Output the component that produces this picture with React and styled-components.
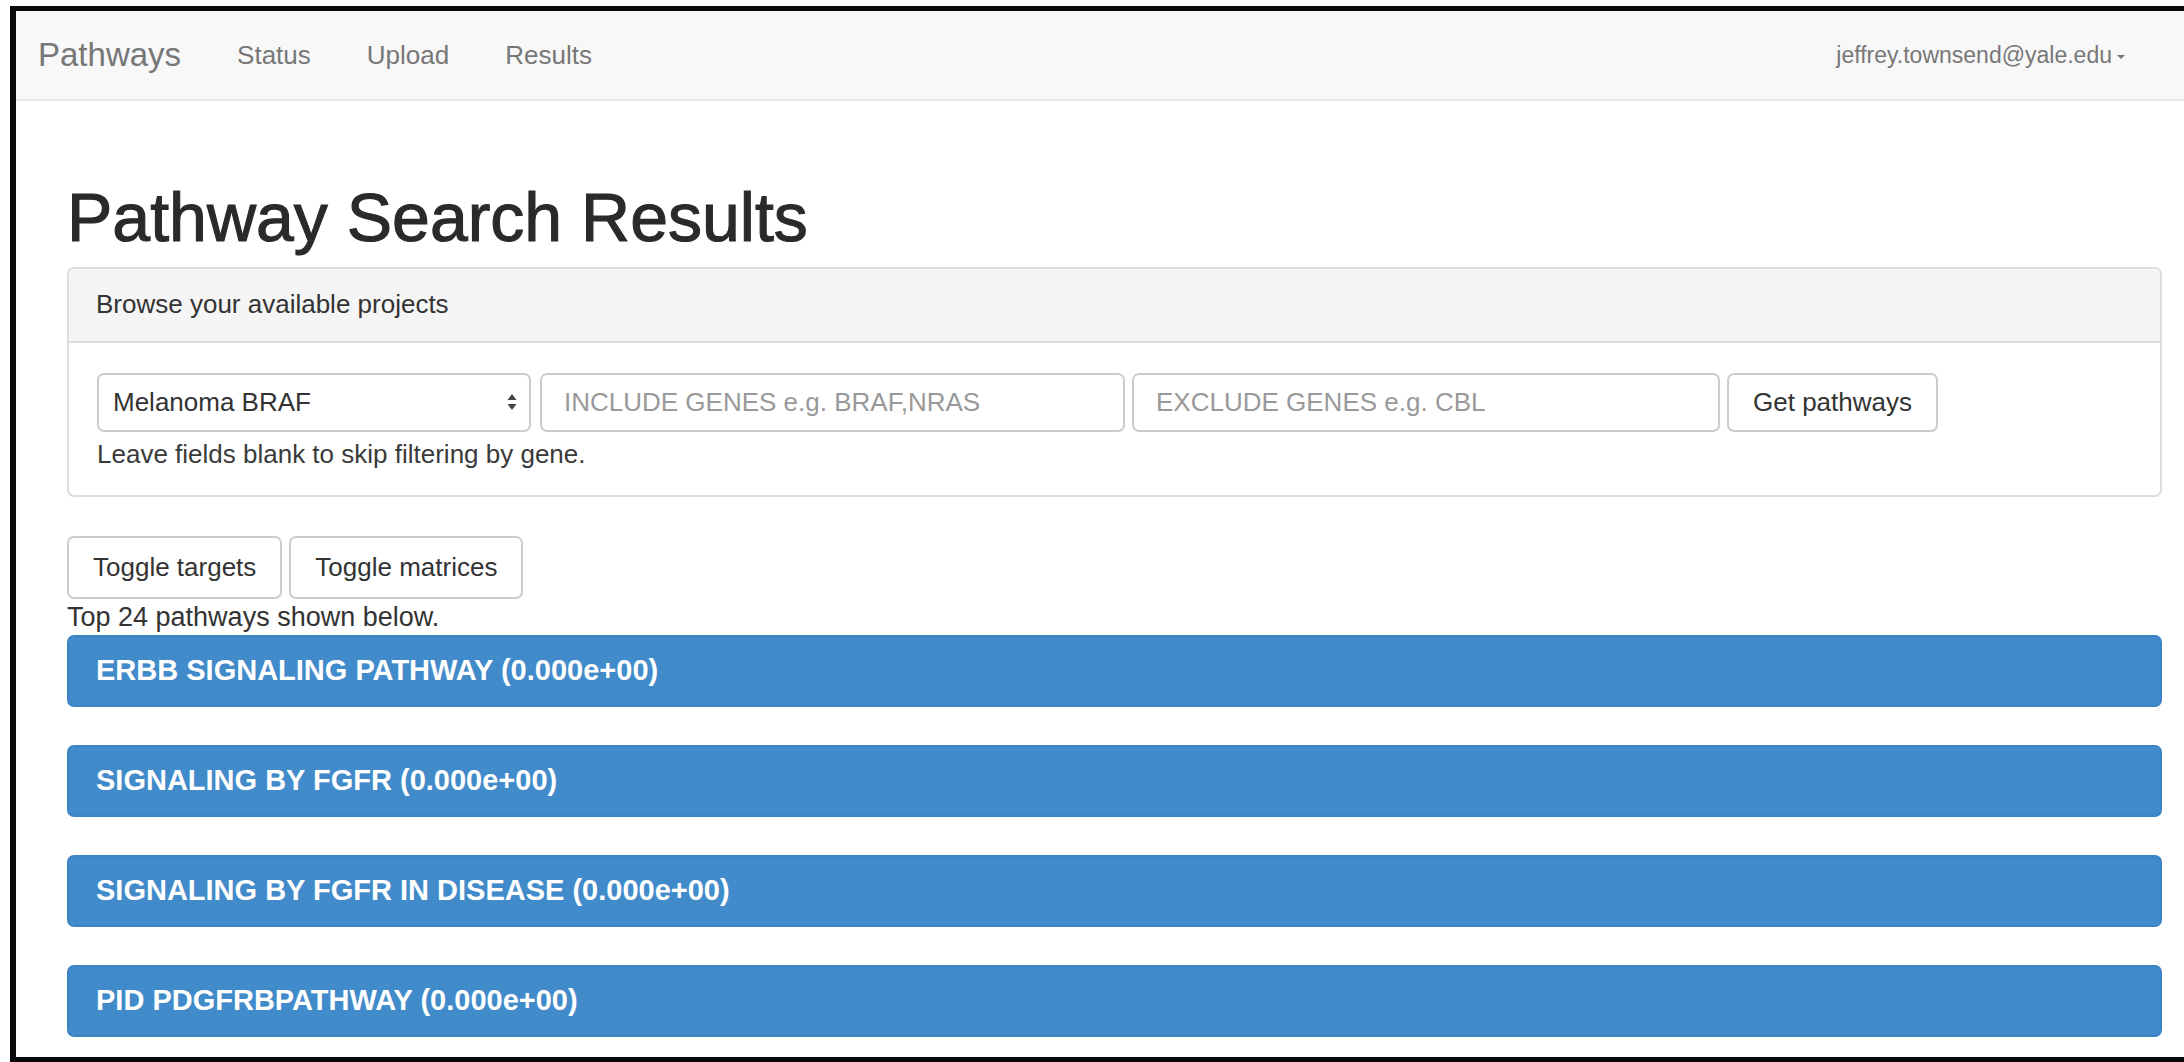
import styled, { createGlobalStyle } from 'styled-components'

const GlobalStyle = createGlobalStyle`
  html, body {
    margin: 0;
    padding: 0;
    background: #fff;
  }
  body {
    font-family: "Liberation Sans", Arial, sans-serif;
    color: #333;
  }
  * {
    box-sizing: border-box;
  }
`

const pathways = [
  'ERBB SIGNALING PATHWAY (0.000e+00)',
  'SIGNALING BY FGFR (0.000e+00)',
  'SIGNALING BY FGFR IN DISEASE (0.000e+00)',
  'PID PDGFRBPATHWAY (0.000e+00)',
]

const App = () => {
  return (
    <>
      <GlobalStyle />
      <Frame>
        <Navbar>
          <Brand>Pathways</Brand>
          <NavLinks>
            <NavLink>Status</NavLink>
            <NavLink>Upload</NavLink>
            <NavLink>Results</NavLink>
          </NavLinks>
          <UserMenu>
            jeffrey.townsend@yale.edu
            <Caret />
          </UserMenu>
        </Navbar>

        <Container>
          <Title>Pathway Search Results</Title>

          <Panel>
            <PanelHeading>Browse your available projects</PanelHeading>
            <PanelBody>
              <FormRow>
                <SelectBox>
                  <span>Melanoma BRAF</span>
                  <svg width="10" height="20" viewBox="0 0 10 20">
                    <path d="M5 2 L9.5 8 H0.5 Z" fill="#444" />
                    <path d="M5 18 L9.5 12 H0.5 Z" fill="#444" />
                  </svg>
                </SelectBox>
                <TextInput $width={585} placeholder="INCLUDE GENES e.g. BRAF,NRAS" />
                <TextInput $width={588} placeholder="EXCLUDE GENES e.g. CBL" />
                <Button>Get pathways</Button>
              </FormRow>
              <HelpText>Leave fields blank to skip filtering by gene.</HelpText>
            </PanelBody>
          </Panel>

          <ButtonRow>
            <Button $tall>Toggle targets</Button>
            <Button $tall>Toggle matrices</Button>
          </ButtonRow>
          <Summary>Top 24 pathways shown below.</Summary>

          {pathways.map((name) => (
            <PathwayBar key={name}>{name}</PathwayBar>
          ))}
        </Container>
      </Frame>
    </>
  )
}

export default App

const Frame = styled.div`
  margin: 6px 0 0 10px;
  height: 1056px;
  border-top: 5px solid #0a0a0a;
  border-left: 6px solid #0a0a0a;
  border-bottom: 5px solid #0a0a0a;
  overflow: hidden;
  background: #fff;
`

const Navbar = styled.nav`
  height: 90px;
  display: flex;
  align-items: center;
  padding: 0 59px 0 22px;
  background: #f8f8f8;
  border-bottom: 2px solid #e7e7e7;
`

const Brand = styled.div`
  font-size: 33px;
  color: #777;
  margin-right: 56px;
`

const NavLinks = styled.div`
  display: flex;
  gap: 56px;
  flex: 1;
`

const NavLink = styled.a`
  font-size: 26px;
  color: #777;
  cursor: pointer;
`

const UserMenu = styled.div`
  display: flex;
  align-items: center;
  font-size: 23px;
  color: #777;
`

const Caret = styled.span`
  width: 0;
  height: 0;
  margin-left: 5px;
  margin-top: 3px;
  border-top: 4px solid #777;
  border-left: 4px solid transparent;
  border-right: 4px solid transparent;
`

const Container = styled.div`
  padding: 0 22px 0 51px;
`

const Title = styled.h1`
  margin: 80px 0 13px;
  font-size: 68px;
  line-height: 1.07;
  font-weight: 400;
  color: #2a2a2a;
  -webkit-text-stroke: 1.1px #2a2a2a;
`

const Panel = styled.div`
  border: 2px solid #ddd;
  border-radius: 7px;
  margin-bottom: 39px;
`

const PanelHeading = styled.div`
  height: 74px;
  display: flex;
  align-items: center;
  padding: 0 27px;
  background: #f5f5f5;
  border-bottom: 2px solid #ddd;
  border-radius: 5px 5px 0 0;
  font-size: 26px;
`

const PanelBody = styled.div`
  padding: 30px 28px 23px;
`

const FormRow = styled.div`
  display: flex;
  gap: 7px;
`

const field = `
  height: 59px;
  border: 2px solid #ccc;
  border-radius: 7px;
  background: #fff;
  font-family: "Liberation Sans", Arial, sans-serif;
  font-size: 26px;
`

const SelectBox = styled.div`
  ${field}
  width: 434px;
  margin-right: 2px;
  display: flex;
  align-items: center;
  justify-content: space-between;
  padding: 0 12px 0 14px;
  color: #333;
`

const TextInput = styled.input`
  ${field}
  width: ${(p) => p.$width}px;
  padding: 0 22px;
  color: #555;
  outline: none;

  &::placeholder {
    color: #999;
  }
`

const Button = styled.button`
  ${field}
  height: ${(p) => (p.$tall ? 63 : 59)}px;
  padding: 0 24px;
  color: #333;
  cursor: pointer;
`

const HelpText = styled.div`
  margin-top: 4px;
  font-size: 26px;
  line-height: 36px;
  color: #3a3a3a;
`

const ButtonRow = styled.div`
  display: flex;
  gap: 7px;
`

const Summary = styled.div`
  font-size: 27px;
  line-height: 36px;
  color: #333;
`

const PathwayBar = styled.div`
  height: 72px;
  display: flex;
  align-items: center;
  padding: 0 27px;
  margin-bottom: 38px;
  background: #428bca;
  border: 2px solid #3c84c4;
  border-radius: 7px;
  color: #fff;
  font-size: 29px;
  font-weight: 700;
`
